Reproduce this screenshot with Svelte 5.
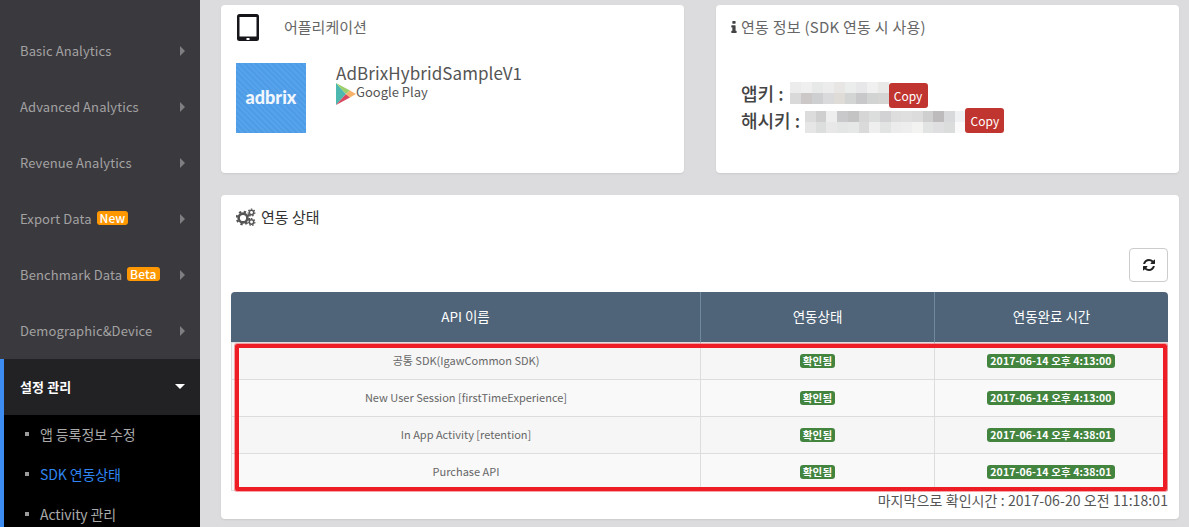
<script>
  const navItems = [
    { label: 'Dashboard' },
    { label: 'Basic Analytics' },
    { label: 'Advanced Analytics' },
    { label: 'Revenue Analytics' },
    { label: 'Export Data', badge: 'New' },
    { label: 'Benchmark Data', badge: 'Beta' },
    { label: 'Demographic&Device' }
  ];
  const subItems = [
    { label: '앱 등록정보 수정' },
    { label: 'SDK 연동상태', current: true },
    { label: 'Activity 관리' }
  ];
  const rows = [
    ['공통 SDK(IgawCommon SDK)', '2017-06-14 오후 4:13:00'],
    ['New User Session [firstTimeExperience]', '2017-06-14 오후 4:13:00'],
    ['In App Activity [retention]', '2017-06-14 오후 4:38:01'],
    ['Purchase API', '2017-06-14 오후 4:38:01']
  ];
  const blurA = [
    '#ececec','#efefef','#e7e8e8','#ececec','#e7e6e5','#ebecec','#e7e7e9','#f0f0f1','#e9e9e7',
    '#d9d9d9','#cdc8c8','#cdcfd0','#dadadd','#dfdcd8','#d3d5d5','#c8c8ca','#d2d3d3','#d5d5d4'
  ];
  const blurB = [
    '#dcdcdc','#cfcfcf','#eeeeee','#c9c9cb','#c5c4c4','#d6d6d6','#dcdddd','#d2d2d4','#dddddd','#dfdfdf','#dcdcdc','#cfcfcf','#bdbbbc','#d8d9da','#eff1f3',
    '#e6e6e6','#dcdddd','#e8e8e8','#e4e5e5','#e6e7e7','#dadada','#efefef','#e2e3e3','#ececec','#eeeeee','#f3f3f2','#e2e4e4','#dfdee0','#dbdcdc','#fafafa'
  ];
</script>

<div class="page">
  <aside class="sidebar">
    <nav class="nav">
      {#each navItems as item}
        <div class="nav-item">
          <span class="nav-label">{item.label}</span>
          {#if item.badge}<span class="badge">{item.badge}</span>{/if}
          <span class="arrow"></span>
        </div>
      {/each}
      <div class="group">
        <div class="nav-item active">
          <span class="nav-label">설정 관리</span>
          <span class="caret"></span>
        </div>
        <div class="sub">
          {#each subItems as s}
            <div class="sub-item" class:current={s.current}><i></i>{s.label}</div>
          {/each}
        </div>
      </div>
    </nav>
  </aside>

  <main class="main">
    <div class="top">
      <section class="card app">
        <div class="app-title">
          <svg class="tablet" viewBox="0 0 22 27" width="22" height="27">
            <rect x="0" y="0" width="22" height="27" rx="2.5" fill="#15151a"/>
            <rect x="2.5" y="3" width="17" height="19.5" fill="#fff"/>
            <rect x="9.5" y="24" width="3" height="2" fill="#fff"/>
          </svg>
          <span>어플리케이션</span>
        </div>
        <div class="app-body">
          <div class="logo"><span>adbrix</span></div>
          <div class="app-info">
            <div class="app-name">AdBrixHybridSampleV1</div>
            <div class="store">
              <svg viewBox="0 0 20 22" width="20" height="22">
                <polygon points="0,0 10,11 0,22" fill="#4cb8b0"/>
                <polygon points="0,0 14,7.5 10,11" fill="#9ccf6c"/>
                <polygon points="0,22 14,14.5 10,11" fill="#d8485f"/>
                <polygon points="14,7.5 20,11 14,14.5 10,11" fill="#f7b26c"/>
              </svg>
              <span>Google Play</span>
            </div>
          </div>
        </div>
      </section>

      <section class="card sdk">
        <div class="sdk-title">
          <svg viewBox="570 130 660 1420" width="6" height="12"><path fill="#444" d="M1216 1344v128q0 26-19 45t-45 19h-512q-26 0-45-19t-19-45v-128q0-26 19-45t45-19h64v-384h-64q-26 0-45-19t-19-45v-128q0-26 19-45t45-19h384q26 0 45 19t19 45v576h64q26 0 45 19t19 45zm-128-1152v192q0 26-19 45t-45 19h-256q-26 0-45-19t-19-45v-192q0-26 19-45t45-19h256q26 0 45 19t19 45z"/></svg>
          <span>연동 정보 (SDK 연동 시 사용)</span>
        </div>
        <div class="keys">
          <div class="key">
            <span class="key-label first">앱키 :</span>
            <div class="mosaic a">
              {#each blurA as c}<i style="background:{c}"></i>{/each}
            </div>
            <button class="copy">Copy</button>
          </div>
          <div class="key">
            <span class="key-label second">해시키 :</span>
            <div class="mosaic b">
              {#each blurB as c}<i style="background:{c}"></i>{/each}
            </div>
            <button class="copy">Copy</button>
          </div>
        </div>
      </section>
    </div>

    <section class="card status">
      <div class="status-title">
        <svg viewBox="0 0 20 18" width="20" height="18">
          <circle cx="7" cy="10" r="4.4" fill="none" stroke="#555" stroke-width="2.6"/>
          <circle cx="7" cy="10" r="6.3" fill="none" stroke="#555" stroke-width="2" stroke-dasharray="2.4 2.55"/>
          <circle cx="15.5" cy="4.5" r="2.2" fill="none" stroke="#555" stroke-width="1.5"/>
          <circle cx="15.5" cy="4.5" r="3.4" fill="none" stroke="#555" stroke-width="1.2" stroke-dasharray="1.5 1.5"/>
          <circle cx="15.5" cy="14" r="2.2" fill="none" stroke="#555" stroke-width="1.5"/>
          <circle cx="15.5" cy="14" r="3.4" fill="none" stroke="#555" stroke-width="1.2" stroke-dasharray="1.5 1.5"/>
        </svg>
        <span>연동 상태</span>
      </div>
      <div class="toolbar">
        <button class="refresh" aria-label="refresh">
          <svg viewBox="0 0 1792 1792" width="14" height="14"><path fill="#222" d="M1639 1056q0 5-1 7-64 268-268 434.5t-478 166.5q-146 0-282.5-55t-243.5-157l-129 129q-19 19-45 19t-45-19-19-45v-448q0-26 19-45t45-19h448q26 0 45 19t19 45-19 45l-137 137q71 66 161 102t187 36q134 0 250-65t186-179q11-17 53-117 8-23 30-23h192q13 0 22.5 9.5t9.5 22.5zm25-800v448q0 26-19 45t-45 19h-448q-26 0-45-19t-19-45 19-45l138-138q-148-137-349-137-134 0-250 65t-186 179q-11 17-53 117-8 23-30 23h-199q-13 0-22.5-9.5t-9.5-22.5v-7q65-268 270-434.5t480-166.5q146 0 284 55.5t245 156.5l130-129q19-19 45-19t45 19 19 45z"/></svg>
        </button>
      </div>
      <div class="table-wrap">
        <table>
          <colgroup><col class="c1" /><col class="c2" /><col class="c3" /></colgroup>
          <thead>
            <tr><th>API 이름</th><th>연동상태</th><th>연동완료 시간</th></tr>
          </thead>
          <tbody>
            {#each rows as r}
              <tr>
                <td>{r[0]}</td>
                <td><span class="label">확인됨</span></td>
                <td><span class="label">{r[1]}</span></td>
              </tr>
            {/each}
          </tbody>
        </table>
        <div class="highlight"></div>
      </div>
      <div class="last">마지막으로 확인시간 : 2017-06-20 오전 11:18:01</div>
    </section>
  </main>
</div>

<style>
  :global(body) {
    margin: 0;
    background: #dcdcde;
  }
  .page {
    display: flex;
    width: 1189px;
    height: 527px;
    overflow: hidden;
    font-family: "Noto Sans CJK KR", "Noto Sans", sans-serif;
    color: #555;
  }
  .sidebar {
    width: 200px;
    flex: none;
    background: #3a393e;
    overflow: hidden;
  }
  .nav {
    margin-top: -33px;
  }
  .nav-item {
    position: relative;
    box-sizing: border-box;
    display: flex;
    align-items: center;
    gap: 5px;
    height: 56px;
    padding: 0 0 2px 20px;
    font-size: 13px;
    letter-spacing: 0.1px;
    color: #a3a2a2;
  }
  .badge {
    background: #ff9800;
    color: #fff;
    font-size: 12px;
    font-weight: 500;
    line-height: 14px;
    padding: 0 3px;
    border-radius: 3px;
  }
  .arrow {
    position: absolute;
    left: 180px;
    top: 23px;
    border-left: 5px solid #7f7f82;
    border-top: 5.5px solid transparent;
    border-bottom: 5.5px solid transparent;
  }
  .group {
    border-left: 4px solid #3c8cf2;
  }
  .nav-item.active {
    background: #222225;
    color: #fff;
    font-weight: 700;
    padding-left: 16px;
  }
  .caret {
    position: absolute;
    left: 171px;
    top: 25px;
    border-top: 5px solid #fff;
    border-left: 5px solid transparent;
    border-right: 5px solid transparent;
  }
  .sub {
    background: #000;
    height: 140px;
  }
  .sub-item {
    box-sizing: border-box;
    display: flex;
    align-items: center;
    height: 40px;
    padding-bottom: 2px;
    font-size: 14px;
    letter-spacing: -0.1px;
    color: #a9a9a9;
  }
  .sub-item i {
    width: 4px;
    height: 4px;
    background: #9a9a9a;
    margin: 0 11px 0 21px;
  }
  .sub-item.current {
    color: #2f86f2;
  }
  .main {
    flex: 1;
    min-width: 0;
    padding: 5px 10px 0 21px;
  }
  .top {
    display: grid;
    grid-template-columns: 463px 463px;
    gap: 32px;
  }
  .card {
    background: #fff;
    border-radius: 4px;
    box-shadow: 0 1px 2px rgba(0, 0, 0, 0.08);
  }
  .app, .sdk {
    height: 168px;
  }
  .app {
    padding: 9px 15px 0 15px;
    box-sizing: border-box;
  }
  .app-title {
    display: flex;
    align-items: center;
    margin-left: 1px;
    height: 27px;
    gap: 25px;
    font-size: 15px;
    color: #666;
  }
  .app-title span { margin-top: -3px; }
  .app-body {
    display: flex;
    gap: 30px;
    margin-top: 22px;
  }
  .logo {
    width: 70px;
    height: 70px;
    display: flex;
    align-items: center;
    justify-content: center;
    background: repeating-linear-gradient(45deg, #56a3ec 0 2px, #4f9ce6 2px 4px);
    color: #f2f7fd;
    font-size: 18px;
    font-weight: 900;
    font-family: "Lato", sans-serif;
  }
  .logo span { margin-top: -2px; }
  .app-name {
    font-size: 17px;
    line-height: 20px;
    letter-spacing: 0.08px;
    color: #555;
  }
  .store {
    display: flex;
    align-items: flex-start;
    font-size: 13px;
    line-height: 18px;
    color: #555;
  }
  .sdk {
    padding: 12px 15px 0;
    box-sizing: border-box;
    position: relative;
  }
  .sdk-title {
    display: flex;
    align-items: center;
    gap: 4px;
    font-size: 15px;
    line-height: 20px;
    letter-spacing: 0.25px;
    color: #666;
  }
  .keys {
    margin-top: 46px;
    margin-left: 10px;
  }
  .key {
    display: flex;
    align-items: center;
    height: 25px;
    font-size: 18px;
    color: #444;
  }
  .key-label {
    font-weight: 500;
    white-space: nowrap;
  }
  .key-label.first { margin-bottom: 5px; }
  .key-label.second { margin-bottom: 2px; }
  .mosaic {
    display: grid;
    grid-auto-rows: 11px;
    height: 22px;
  }
  .mosaic.a {
    grid-template-columns: repeat(9, 11px);
    margin-left: 6px;
    margin-top: -6px;
  }
  .mosaic.b {
    grid-template-columns: repeat(15, 10.7px);
    margin-left: 5px;
    margin-top: 3px;
  }
  .copy {
    width: 39px;
    height: 25px;
    padding: 0;
    border: 0;
    border-radius: 3px;
    background: #c0352f;
    color: #fff;
    font: 12px "Noto Sans CJK KR", sans-serif;
  }
  .status {
    margin-top: 22px;
    height: 324px;
    padding: 9px 11px 0 10px;
    box-sizing: border-box;
    width: 958px;
  }
  .status-title {
    display: flex;
    align-items: center;
    gap: 5px;
    margin-left: 5px;
    height: 24px;
    font-size: 15px;
    color: #333;
  }
  .status-title svg { margin-top: 2px; }
  .toolbar {
    display: flex;
    justify-content: flex-end;
    margin-top: 20px;
  }
  .refresh {
    width: 39px;
    height: 34px;
    padding: 0;
    background: #fff;
    border: 1px solid #ccc;
    border-radius: 4px;
    display: flex;
    align-items: center;
    justify-content: center;
  }
  .table-wrap {
    position: relative;
    margin-top: 10px;
  }
  table {
    width: 937px;
    table-layout: fixed;
    border-collapse: separate;
    border-spacing: 0;
    font-size: 11px;
  }
  .c1 { width: 469px; }
  .c2, .c3 { width: 234px; }
  th {
    height: 51px;
    padding: 0 0 3px;
    box-sizing: border-box;
    background: #4f6478;
    color: #fff;
    font-weight: 400;
    font-size: 13.5px;
    border-left: 1px solid #6f8a9c;
    border-bottom: 1px solid #ddd;
  }
  th:first-child {
    border-left: 0;
    border-top-left-radius: 4px;
  }
  th:last-child {
    border-top-right-radius: 4px;
  }
  td {
    height: 33px;
    padding: 0 0 3px;
    text-align: center;
    color: #666;
    background: #f9f9f9;
    border-left: 1px solid #ddd;
    border-bottom: 1px solid #ddd;
  }
  tr:nth-child(odd) td {
    background: #f6f6f6;
  }
  td:last-child {
    border-right: 1px solid #ddd;
  }
  .label {
    display: inline-block;
    background: #43843f;
    color: #fff;
    font-size: 10.5px;
    font-weight: 700;
    letter-spacing: 0.1px;
    line-height: 14px;
    padding: 0 3px;
    border-radius: 3px;
    vertical-align: middle;
  }
  .highlight {
    position: absolute;
    left: 4px;
    top: 52px;
    width: 924px;
    height: 139px;
    border: 4px solid #ee1c25;
    border-radius: 2px;
    box-shadow: 0 0 0 1px rgba(238, 28, 37, 0.4);
    pointer-events: none;
  }
  .last {
    text-align: right;
    font-size: 14px;
    line-height: 18px;
    letter-spacing: 0.08px;
    color: #555;
  }
</style>
